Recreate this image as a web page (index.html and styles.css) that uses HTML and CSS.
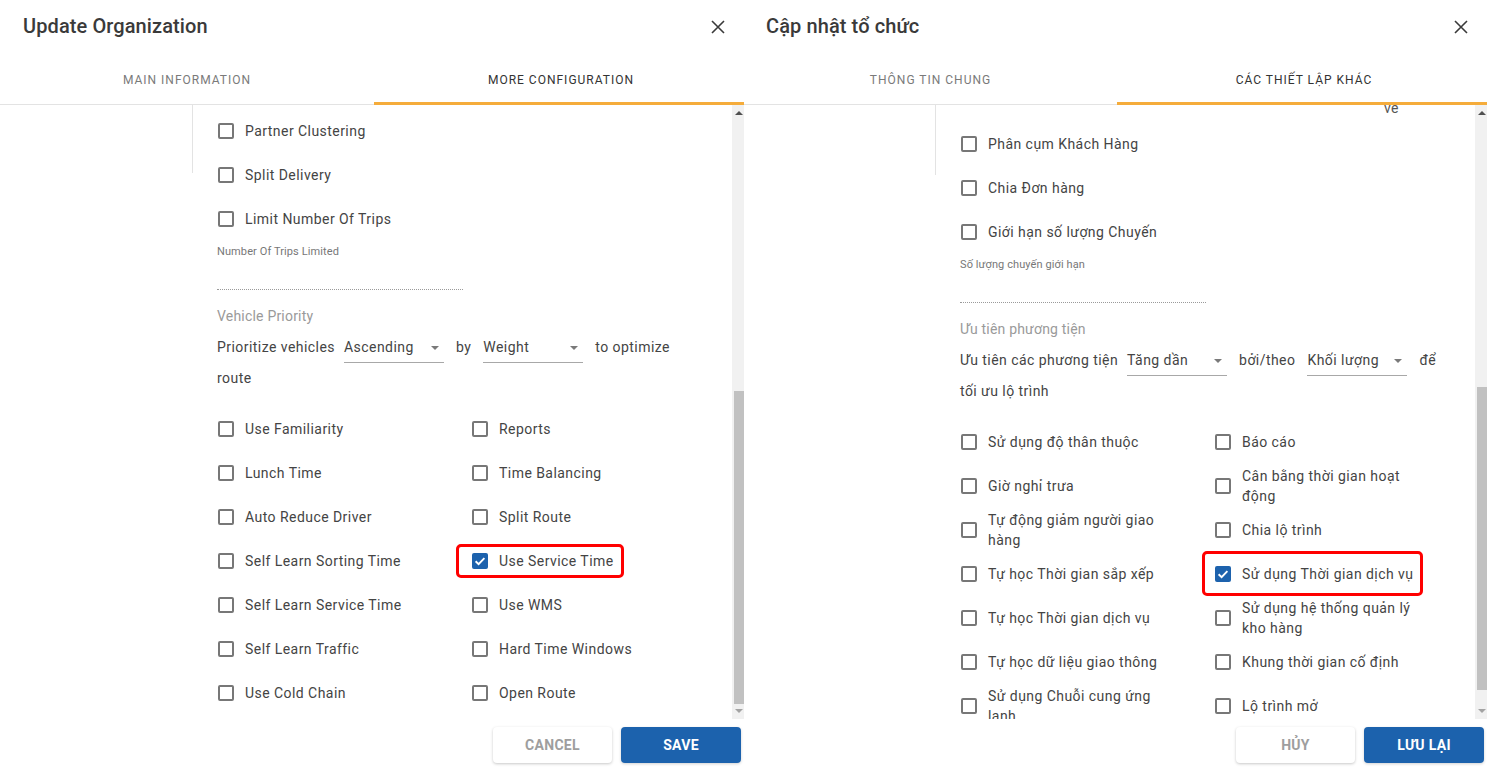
FILE: index.html
```html
<!DOCTYPE html>
<html lang="en">
<head>
<meta charset="utf-8">
<title>Update Organization</title>
<link rel="stylesheet" href="styles.css">
</head>
<body>
<div class="dialog dialog--left">
  <div class="header">
    <div class="title">Update Organization</div>
    <svg class="close" width="14" height="14" viewBox="0 0 14 14"><path d="M1 1L13 13M13 1L1 13" stroke="#3a3a3a" stroke-width="1.6" fill="none"/></svg>
  </div>
  <div class="tabs">
    <div class="tab">MAIN INFORMATION</div>
    <div class="tab tab--active">MORE CONFIGURATION</div>
  </div>
  <div class="body">
    <div class="scroll">
      <div class="side"><div class="side-line"></div></div>
      <div class="form form--pad">
        <div class="row"><span class="cb"></span><span class="lbl">Partner Clustering</span></div>
        <div class="row"><span class="cb"></span><span class="lbl">Split Delivery</span></div>
        <div class="row"><span class="cb"></span><span class="lbl">Limit Number Of Trips</span></div>
        <div class="field">
          <div class="field-label">Number Of Trips Limited</div>
          <div class="field-input"></div>
        </div>
        <div class="section-label">Vehicle Priority</div>
        <div class="sentence">
          <span class="word">Prioritize vehicles</span>
          <span class="select select--first">Ascending<i class="caret"></i></span>
          <span class="word">by</span>
          <span class="select">Weight<i class="caret"></i></span>
          <span class="word">to optimize</span>
          <span class="word">route</span>
        </div>
        <div class="grid">
          <div class="row"><span class="cb"></span><span class="lbl">Use Familiarity</span></div>
          <div class="row"><span class="cb"></span><span class="lbl">Reports</span></div>
          <div class="row"><span class="cb"></span><span class="lbl">Lunch Time</span></div>
          <div class="row"><span class="cb"></span><span class="lbl">Time Balancing</span></div>
          <div class="row"><span class="cb"></span><span class="lbl">Auto Reduce Driver</span></div>
          <div class="row"><span class="cb"></span><span class="lbl">Split Route</span></div>
          <div class="row"><span class="cb"></span><span class="lbl">Self Learn Sorting Time</span></div>
          <div class="row"><span class="mark mark--en"><span class="cb cb--on"><svg width="16" height="16" viewBox="0 0 16 16"><path d="M3.6 8.3L6.6 11.2L12.4 5.2" stroke="#fff" stroke-width="1.9" fill="none"/></svg></span><span class="lbl">Use Service Time</span></span></div>
          <div class="row"><span class="cb"></span><span class="lbl">Self Learn Service Time</span></div>
          <div class="row"><span class="cb"></span><span class="lbl">Use WMS</span></div>
          <div class="row"><span class="cb"></span><span class="lbl">Self Learn Traffic</span></div>
          <div class="row"><span class="cb"></span><span class="lbl">Hard Time Windows</span></div>
          <div class="row"><span class="cb"></span><span class="lbl">Use Cold Chain</span></div>
          <div class="row"><span class="cb"></span><span class="lbl">Open Route</span></div>
        </div>
      </div>
    </div>
    <div class="scrollbar">
      <i class="arrow-up"></i>
      <div class="track"><div class="thumb thumb--left"></div></div>
      <i class="arrow-down"></i>
    </div>
  </div>
  <div class="footer">
    <button class="btn btn--cancel">CANCEL</button>
    <button class="btn btn--save">SAVE</button>
  </div>
</div>

<div class="dialog dialog--right">
  <div class="header">
    <div class="title">Cập nhật tổ chức</div>
    <svg class="close" width="14" height="14" viewBox="0 0 14 14"><path d="M1 1L13 13M13 1L1 13" stroke="#3a3a3a" stroke-width="1.6" fill="none"/></svg>
  </div>
  <div class="tabs">
    <div class="tab">THÔNG TIN CHUNG</div>
    <div class="tab tab--active">CÁC THIẾT LẬP KHÁC</div>
  </div>
  <div class="body">
    <div class="scroll">
      <div class="side"><div class="side-line side-line--tall"></div></div>
      <div class="form">
        <div class="cut-line">ve</div>
        <div class="row"><span class="cb"></span><span class="lbl">Phân cụm Khách Hàng</span></div>
        <div class="row"><span class="cb"></span><span class="lbl">Chia Đơn hàng</span></div>
        <div class="row"><span class="cb"></span><span class="lbl">Giới hạn số lượng Chuyến</span></div>
        <div class="field">
          <div class="field-label">Số lượng chuyến giới hạn</div>
          <div class="field-input"></div>
        </div>
        <div class="section-label">Ưu tiên phương tiện</div>
        <div class="sentence">
          <span class="word">Ưu tiên các phương tiện</span>
          <span class="select select--first">Tăng dần<i class="caret"></i></span>
          <span class="word">bởi/theo</span>
          <span class="select">Khối lượng<i class="caret"></i></span>
          <span class="word">để</span>
          <span class="word">tối ưu lộ trình</span>
        </div>
        <div class="grid">
          <div class="row"><span class="cb"></span><span class="lbl">Sử dụng độ thân thuộc</span></div>
          <div class="row"><span class="cb"></span><span class="lbl">Báo cáo</span></div>
          <div class="row"><span class="cb"></span><span class="lbl">Giờ nghỉ trưa</span></div>
          <div class="row"><span class="cb"></span><span class="lbl">Cân bằng thời gian hoạt động</span></div>
          <div class="row"><span class="cb"></span><span class="lbl">Tự động giảm người giao hàng</span></div>
          <div class="row"><span class="cb"></span><span class="lbl">Chia lộ trình</span></div>
          <div class="row"><span class="cb"></span><span class="lbl">Tự học Thời gian sắp xếp</span></div>
          <div class="row"><span class="mark mark--vi"><span class="cb cb--on"><svg width="16" height="16" viewBox="0 0 16 16"><path d="M3.6 8.3L6.6 11.2L12.4 5.2" stroke="#fff" stroke-width="1.9" fill="none"/></svg></span><span class="lbl">Sử dụng Thời gian dịch vụ</span></span></div>
          <div class="row"><span class="cb"></span><span class="lbl">Tự học Thời gian dịch vụ</span></div>
          <div class="row"><span class="cb"></span><span class="lbl">Sử dụng hệ thống quản lý kho hàng</span></div>
          <div class="row"><span class="cb"></span><span class="lbl">Tự học dữ liệu giao thông</span></div>
          <div class="row"><span class="cb"></span><span class="lbl">Khung thời gian cố định</span></div>
          <div class="row"><span class="cb"></span><span class="lbl">Sử dụng Chuỗi cung ứng lạnh</span></div>
          <div class="row"><span class="cb"></span><span class="lbl">Lộ trình mở</span></div>
        </div>
      </div>
    </div>
    <div class="scrollbar">
      <i class="arrow-up"></i>
      <div class="track"><div class="thumb thumb--right"></div></div>
      <i class="arrow-down"></i>
    </div>
  </div>
  <div class="footer">
    <button class="btn btn--cancel">HỦY</button>
    <button class="btn btn--save">LƯU LẠI</button>
  </div>
</div>
</body>
</html>
```

FILE: styles.css
```css
* { box-sizing: border-box; }
html, body { margin: 0; padding: 0; }
body {
  display: flex;
  width: 1487px;
  height: 770px;
  overflow: hidden;
  background: #fff;
  font-family: Roboto, "Noto Sans", "Liberation Sans", sans-serif;
  color: #444;
}
.dialog {
  display: flex;
  flex-direction: column;
  height: 770px;
  background: #fff;
  flex: none;
}
.dialog--left { width: 744px; }
.dialog--right { width: 743px; }

.header {
  height: 52px;
  display: flex;
  align-items: center;
  justify-content: space-between;
  padding: 0 19px 0 23px;
}
.dialog--right .header { padding-left: 22px; }
.title {
  font-size: 20px;
  font-weight: 500;
  color: #3a3a3a;
  letter-spacing: 0.1px;
}
.close { display: block; margin-top: 1px; }

.tabs {
  height: 53px;
  display: flex;
  border-bottom: 1px solid #e3e3e3;
}
.tab {
  flex: 1;
  display: flex;
  align-items: center;
  justify-content: center;
  font-size: 12px;
  font-weight: 400;
  letter-spacing: 1px;
  color: #7a7a7a;
  padding-top: 3px;
}
.dialog--left .tab:first-child { flex: none; width: 374px; }
.dialog--right .tab:first-child { flex: none; width: 373px; }
.tab--active {
  color: #333;
  border-bottom: 3px solid #f5ac3b;
  margin-bottom: -1px;
  padding-top: 6px;
  padding-left: 4px;
}

.body {
  flex: 1;
  display: flex;
  min-height: 0;
}
.scroll {
  flex: 1;
  display: flex;
  overflow: hidden;
}
.side { width: 193px; flex: none; }
.side-line { height: 68px; border-right: 1px solid #e3e3e3; }
.side-line--tall { height: 70px; }
.dialog--right .side { width: 192px; }

.form {
  width: 510px;
  flex: none;
  padding-left: 24px;
  font-size: 14px;
  letter-spacing: 0.45px;
}
.form--pad { padding-top: 4px; }

.cut-line {
  margin-top: -4px;
  height: 21px;
  line-height: 14px;
  padding-left: 424px;
  letter-spacing: 0.25px;
  color: #555;
}

.row {
  display: flex;
  align-items: center;
  min-height: 44px;
}
.cb {
  flex: none;
  width: 16px;
  height: 16px;
  border: 2px solid #777;
  border-radius: 2px;
  margin: 0 11px 0 1px;
  background: #fff;
}
.cb--on {
  border: none;
  background: #1d62ad;
  display: flex;
}
.lbl {
  line-height: 20px;
  color: #444;
  max-width: 190px;
}

.mark {
  position: relative;
  display: flex;
  align-items: center;
}
.mark::after {
  content: "";
  position: absolute;
  border: 3px solid #f00;
  border-radius: 5px;
  pointer-events: none;
}
.mark--en::after { left: -15px; right: -10px; top: -7px; bottom: -7px; }
.mark--vi::after { left: -12px; right: -10px; top: -13px; bottom: -12px; }

.field { width: 246px; }
.field-label {
  margin-top: 4px;
  font-size: 11px;
  line-height: 14px;
  color: #777;
  letter-spacing: 0.1px;
}
.field-input {
  height: 31px;
  border-bottom: 1px dotted #9a9a9a;
}
.section-label {
  margin-top: 16px;
  line-height: 20px;
  color: #9a9a9a;
  letter-spacing: 0.2px;
}
.sentence {
  width: 486px;
  margin-top: 6px;
  display: flex;
  flex-wrap: wrap;
  align-items: flex-start;
  column-gap: 12px;
  color: #444;
}
.word {
  line-height: 30px;
  white-space: nowrap;
}
.select {
  position: relative;
  width: 100px;
  height: 31px;
  line-height: 30px;
  border-bottom: 1px solid #a8a8a8;
}
.select--first { margin-left: -3px; }
.caret {
  position: absolute;
  right: 5px;
  top: 14px;
  width: 0;
  height: 0;
  border-left: 4px solid transparent;
  border-right: 4px solid transparent;
  border-top: 4px solid #7a7a7a;
}
.grid {
  margin-top: 14px;
  display: grid;
  grid-template-columns: 254px 254px;
}

.scrollbar {
  width: 12px;
  flex: none;
  background: #f1f1f1;
  display: flex;
  flex-direction: column;
  align-items: center;
}
.arrow-up, .arrow-down {
  display: block;
  width: 0;
  height: 0;
  border-left: 4px solid transparent;
  border-right: 4px solid transparent;
  margin-left: 2px;
}
.arrow-up { margin-top: 6px; border-bottom: 4px solid #505050; }
.arrow-down { margin-bottom: 6px; border-top: 4px solid #a3a3a3; }
.track { flex: 1; width: 100%; position: relative; }
.thumb {
  margin-left: 2px;
  width: 10px;
  background: #c1c1c1;
}
.thumb--left { margin-top: 276px; height: 313px; }
.thumb--right { margin-top: 272px; height: 303px; }

.footer {
  height: 51px;
  flex: none;
  display: flex;
  justify-content: flex-end;
  align-items: flex-start;
  gap: 9px;
  padding: 8px 3px 0 0;
}
.btn {
  height: 36px;
  border: none;
  border-radius: 4px;
  font-family: Roboto, "Noto Sans", "Liberation Sans", sans-serif;
  font-size: 14px;
  font-weight: 700;
  letter-spacing: 0.3px;
  cursor: pointer;
}
.btn--cancel {
  width: 119px;
  background: #fff;
  color: #9e9e9e;
  box-shadow: 0 1px 3px rgba(0,0,0,0.22);
}
.btn--save {
  width: 120px;
  background: #1c62ad;
  color: #fff;
  box-shadow: 0 1px 3px rgba(0,0,0,0.18);
}
```
